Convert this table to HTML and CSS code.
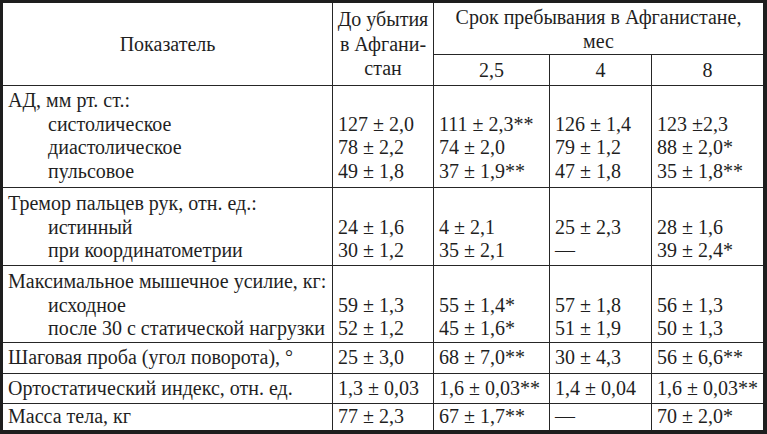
FILE: index.html
```
<!DOCTYPE html>
<html lang="ru">
<head>
<meta charset="utf-8">
<link rel="stylesheet" href="styles.css">
</head>
<body>
<div class="frame">
<div class="grid">
  <div class="hc b r2">Показатель</div>
  <div class="hc b r2 lh245">До убытия<br>в Афгани-<br>стан</div>
  <div class="hc span3">Срок пребывания в Афганистане,<br>мес</div>
  <div class="hc b">2,5</div>
  <div class="hc b">4</div>
  <div class="hc">8</div>

  <div class="cell b g4"><p>АД, мм рт. ст.:</p><p class="ind">систолическое</p><p class="ind">диастолическое</p><p class="ind">пульсовое</p></div>
  <div class="cell b g4"><p>&nbsp;</p><p>127 ± 2,0</p><p>78 ± 2,2</p><p>49 ± 1,8</p></div>
  <div class="cell b g4"><p>&nbsp;</p><p>111 ± 2,3**</p><p>74 ± 2,0</p><p>37 ± 1,9**</p></div>
  <div class="cell b g4"><p>&nbsp;</p><p>126 ± 1,4</p><p>79 ± 1,2</p><p>47 ± 1,8</p></div>
  <div class="cell g4"><p>&nbsp;</p><p>123 ±2,3</p><p>88 ± 2,0*</p><p>35 ± 1,8**</p></div>

  <div class="cell b g3"><p>Тремор пальцев рук, отн. ед.:</p><p class="ind">истинный</p><p class="ind">при координатометрии</p></div>
  <div class="cell b g3"><p>&nbsp;</p><p>24 ± 1,6</p><p>30 ± 1,2</p></div>
  <div class="cell b g3"><p>&nbsp;</p><p>4 ± 2,1</p><p>35 ± 2,1</p></div>
  <div class="cell b g3"><p>&nbsp;</p><p>25 ± 2,3</p><p>—</p></div>
  <div class="cell g3"><p>&nbsp;</p><p>28 ± 1,6</p><p>39 ± 2,4*</p></div>

  <div class="cell b g3"><p>Максимальное мышечное усилие, кг:</p><p class="ind">исходное</p><p class="ind">после 30 с статической нагрузки</p></div>
  <div class="cell b g3"><p>&nbsp;</p><p>59 ± 1,3</p><p>52 ± 1,2</p></div>
  <div class="cell b g3"><p>&nbsp;</p><p>55 ± 1,4*</p><p>45 ± 1,6*</p></div>
  <div class="cell b g3"><p>&nbsp;</p><p>57 ± 1,8</p><p>51 ± 1,9</p></div>
  <div class="cell g3"><p>&nbsp;</p><p>56 ± 1,3</p><p>50 ± 1,3</p></div>

  <div class="cell b one">Шаговая проба (угол поворота), °</div>
  <div class="cell b one">25 ± 3,0</div>
  <div class="cell b one">68 ± 7,0**</div>
  <div class="cell b one">30 ± 4,3</div>
  <div class="cell one">56 ± 6,6**</div>

  <div class="cell b one">Ортостатический индекс, отн. ед.</div>
  <div class="cell b one">1,3 ± 0,03</div>
  <div class="cell b one">1,6 ± 0,03**</div>
  <div class="cell b one">1,4 ± 0,04</div>
  <div class="cell one">1,6 ± 0,03**</div>

  <div class="cell b one last">Масса тела, кг</div>
  <div class="cell b one last">77 ± 2,3</div>
  <div class="cell b one last">67 ± 1,7**</div>
  <div class="cell b one last">—</div>
  <div class="cell one last">70 ± 2,0*</div>
</div>
</div>
</body>
</html>
```
FILE: styles.css
```
html, body {
  margin: 0;
  padding: 0;
  background: #ffffff;
}
.frame {
  width: 760px;
  height: 427px;
  border-style: solid;
  border-color: #1e1e1e;
  border-width: 3px 4px 4px 3px;
  background: #ffffff;
  overflow: hidden;
  font-family: "Liberation Serif", serif;
  font-size: 20px;
  color: #1f1f1f;
}
.grid {
  display: grid;
  grid-template-columns: 330px 101px 116px 102px 111px;
  grid-template-rows: 52px 31px 102px 78px 77px 31px 30px 26px;
}
.grid > div {
  box-sizing: border-box;
  border-bottom: 1px solid #262626;
  white-space: nowrap;
  overflow: hidden;
}
.grid > .b { border-right: 1px solid #262626; }
.grid > .last { border-bottom: none; }
.hc {
  display: flex;
  align-items: center;
  justify-content: center;
  text-align: center;
  line-height: 24px;
}
.lh245 { line-height: 24.5px; }
.r2 { grid-row: span 2; }
.span3 { grid-column: span 3; }
.cell {
  padding-left: 5px;
  line-height: 23.5px;
}
.cell p { margin: 0; }
.ind { padding-left: 40px; }
.g4 { padding-top: 3px; }
.g3 { padding-top: 4px; }
.one {
  display: flex;
  align-items: center;
}
```
